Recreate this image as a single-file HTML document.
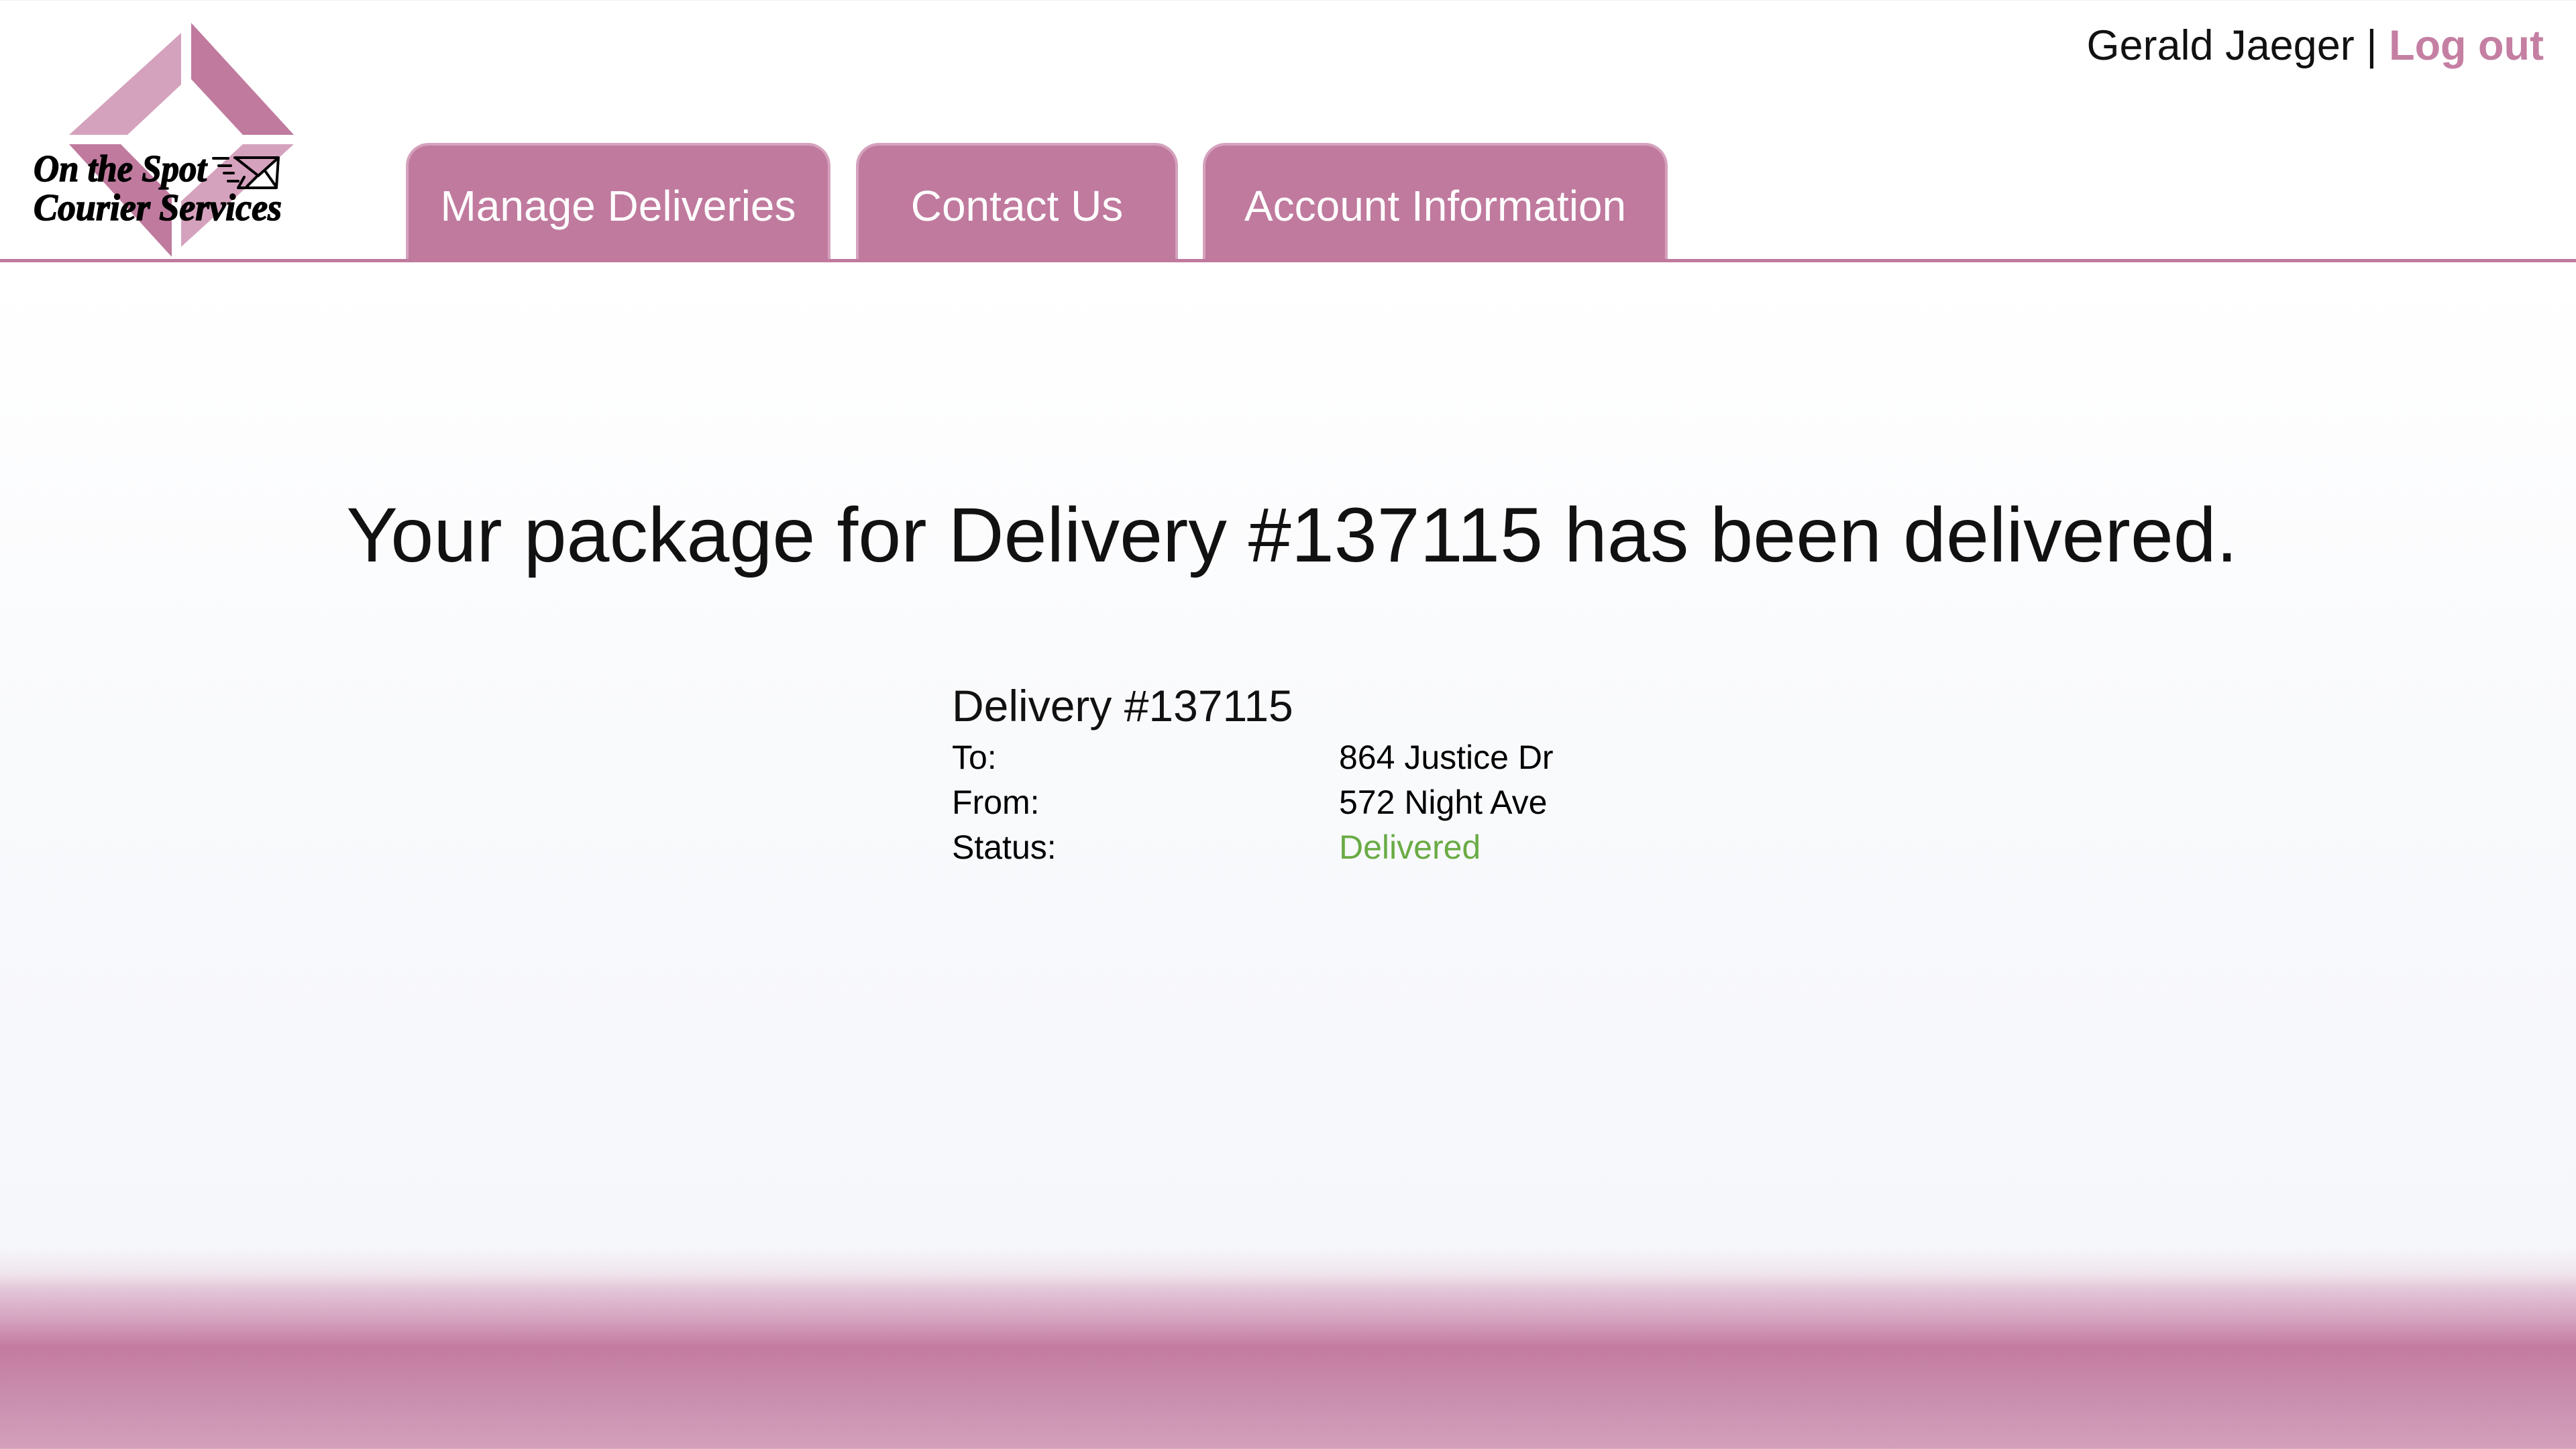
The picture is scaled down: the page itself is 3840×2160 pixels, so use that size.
<!DOCTYPE html>
<html><head><meta charset="utf-8"><style>
html,body{margin:0;padding:0;}
body{width:3840px;height:2160px;position:relative;overflow:hidden;font-family:"Liberation Sans",sans-serif;
background:linear-gradient(to bottom,#ffffff 0px,#ffffff 400px,#f9fafc 1100px,#f6f7fb 1860px,#efe3ec 1900px,#e4c8da 1920px,#d7a8c2 1960px,#c37b9f 2008px,#c98ead 2080px,#d3a1bb 2160px);}
.abs{position:absolute;white-space:nowrap;}
.line{position:absolute;left:0;top:386px;width:3840px;height:5px;background:#c07a9e;}
.tab{position:absolute;top:213px;height:176px;background:#c07a9e;border:4px solid #d5a2bd;border-bottom:none;border-radius:34px 34px 0 0;box-sizing:border-box;color:#fff;font-size:64px;text-align:center;line-height:180px;}
.lbl{font-size:50px;color:#000;}
</style></head><body>
<svg class="abs" style="left:0;top:0" width="460" height="400" viewBox="0 0 460 400">
<polygon points="103,201 270,49 270,126 190,201" fill="#d5a2bd"/>
<polygon points="285,34 285,118 362,201 438,201" fill="#c07a9e"/>
<polygon points="103,215 180,215 256,292 256,383" fill="#c07a9e"/>
<polygon points="438,215 362,215 270,300 270,368" fill="#d5a2bd"/>
<g fill="none" stroke="#000" stroke-width="4" stroke-linecap="round" stroke-linejoin="round">
<path d="M318,236 L340,236 M326,247 L344,247 M334,258 L348,258 M340,270 L355,270"/>
<path d="M350,235 L415,235 L412,280 L355,280 L364,264"/>
<path d="M352,236 L385,262 L414,236"/>
<path d="M384,262 L368,278 M396,256 L410,276"/>
</g>
<text x="50" y="270" font-family="Liberation Serif,serif" font-weight="bold" font-style="italic" font-size="56" textLength="258" lengthAdjust="spacingAndGlyphs" stroke="#000" stroke-width="1.5">On the Spot</text>
<text x="50" y="328" font-family="Liberation Serif,serif" font-weight="bold" font-style="italic" font-size="56" textLength="370" lengthAdjust="spacingAndGlyphs" stroke="#000" stroke-width="1.5">Courier Services</text>
</svg>
<div class="tab" style="left:605px;width:633px;">Manage Deliveries</div>
<div class="tab" style="left:1276px;width:480px;">Contact Us</div>
<div class="tab" style="left:1793px;width:693px;">Account Information</div>
<div class="line"></div>
<div class="abs" style="right:48px;top:30px;font-size:63px;line-height:76px;color:#111;">Gerald Jaeger | <b style="color:#c47fa2">Log out</b></div>
<div class="abs" style="left:0;width:3852px;text-align:center;top:730px;font-size:115px;line-height:136px;color:#111;">Your package for Delivery #137115 has been delivered.</div>
<div class="abs" style="left:1419px;top:1012px;font-size:66px;line-height:80px;color:#111;">Delivery #137115</div>
<div class="abs lbl" style="left:1419px;top:1099px;line-height:60px;">To:</div>
<div class="abs lbl" style="left:1419px;top:1166px;line-height:60px;">From:</div>
<div class="abs lbl" style="left:1419px;top:1233px;line-height:60px;">Status:</div>
<div class="abs lbl" style="left:1996px;top:1099px;line-height:60px;">864 Justice Dr</div>
<div class="abs lbl" style="left:1996px;top:1166px;line-height:60px;">572 Night Ave</div>
<div class="abs lbl" style="left:1996px;top:1233px;line-height:60px;color:#6aab45;">Delivered</div>
</body></html>
